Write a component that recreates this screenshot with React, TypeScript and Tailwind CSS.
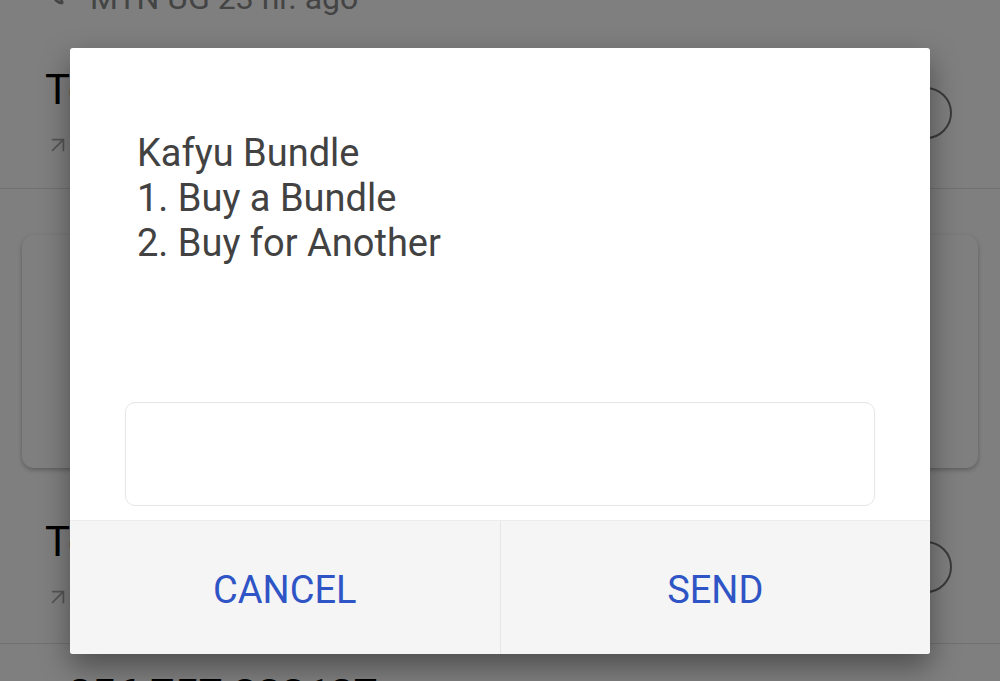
import { ArrowUpRight, Phone } from 'lucide-react'

function CallRow({ title, sub, pad, circleTop, height }: { title: string; sub: string; pad: string; circleTop: string; height: string }) {
  return (
    <div className={`flex items-start justify-between border-b border-[#e0e0e0] pl-[45px] pr-[48px] ${pad} ${height}`}>
      <div className="flex flex-col">
        <div className="text-[42px] leading-[50px] text-black">{title}</div>
        <div className="mt-[12px] flex items-center gap-3 text-[30px] leading-[36px] text-[#888]">
          <ArrowUpRight size={26} strokeWidth={1.6} className="text-[#aaa]" />
          <span>{sub}</span>
        </div>
      </div>
      <div className={`h-[52px] w-[52px] rounded-full border-[2px] border-[#757575] ${circleTop}`} />
    </div>
  )
}

export default function App() {
  return (
    <div className="relative h-[681px] w-[1000px] overflow-hidden bg-white font-['Roboto',sans-serif]">
      {/* list under the dialog */}
      <div className="flex flex-col">
        <div className="flex h-[40px] items-start gap-[26px] pl-[52px]">
          <Phone size={12} className="-mt-[7px] text-[#888]" fill="#888" />
          <span className="-mt-[21px] text-[32px] leading-[38px] text-[#888]">MTN UG 23 hr. ago</span>
        </div>
        <CallRow title="Top up airtime" sub="Outgoing, 0:12" pad="pt-[25px]" circleTop="mt-[22px]" height="h-[149px]" />
        <div className="mx-[22px] mt-[46px] h-[233px] rounded-[12px] bg-white shadow-[0_2px_5px_rgba(0,0,0,0.28)]" />
        <CallRow title="Top up airtime" sub="Outgoing, 0:08" pad="pt-[49px]" circleTop="mt-[24px]" height="h-[176px]" />
        <div className="pl-[45px] pt-[26px] text-[42px] font-bold leading-[50px] text-black">+256 757 333127</div>
      </div>

      {/* scrim */}
      <div className="absolute inset-0 bg-black/50" />

      {/* USSD dialog */}
      <div className="absolute left-[70px] top-[48px] flex h-[606px] w-[860px] flex-col overflow-hidden rounded-[3px] bg-white shadow-[0_12px_30px_rgba(0,0,0,0.4)]">
        <div className="flex flex-1 flex-col justify-between pb-[14px] pt-[83px]">
          <div className="pl-[67px] text-[38px] leading-[45px] text-[#424242]">
            <div>Kafyu Bundle</div>
            <div>1. Buy a Bundle</div>
            <div>2. Buy for Another</div>
          </div>
          <div className="mx-[55px] h-[104px] rounded-[10px] border border-[#e6e6e6] bg-white" />
        </div>
        <div className="flex h-[134px] border-t border-[#ececec] bg-[#f5f5f5]">
          <button className="flex flex-1 items-center justify-center pt-[6px] text-[38px] text-[#2f54c5]">CANCEL</button>
          <div className="w-px bg-[#e6e6e6]" />
          <button className="flex flex-1 items-center justify-center pt-[6px] text-[38px] text-[#2f54c5]">SEND</button>
        </div>
      </div>
    </div>
  )
}
